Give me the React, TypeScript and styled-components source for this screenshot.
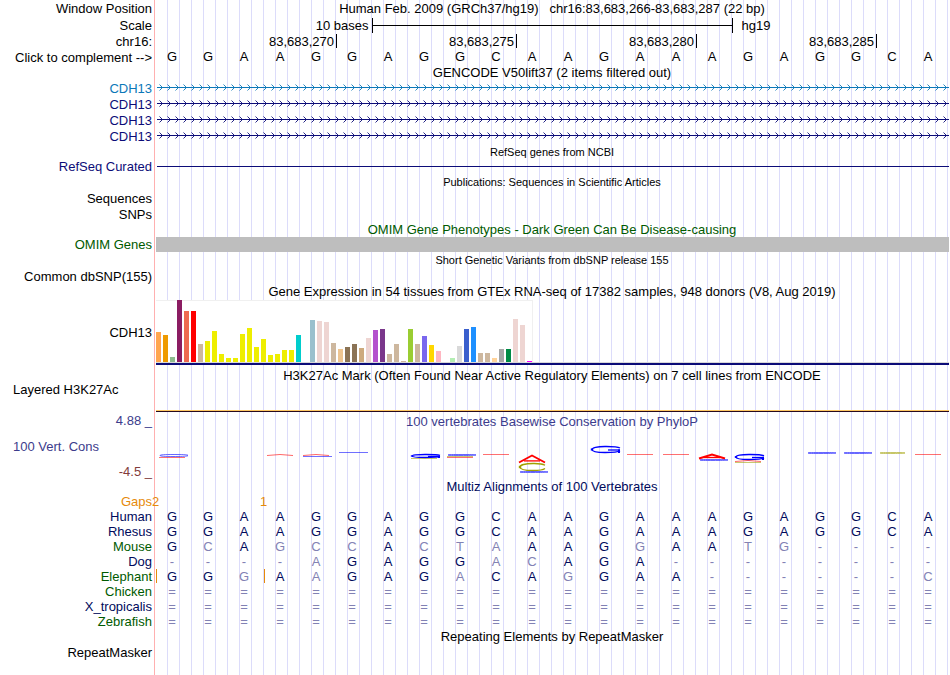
import React from "react";
import styled, { createGlobalStyle } from "styled-components";

const GlobalStyle = createGlobalStyle`
  *, *::before, *::after { box-sizing: border-box; }
  html, body { margin: 0; padding: 0; background: #fff; }
  body {
    font-family: "Liberation Sans", Arial, Helvetica, sans-serif;
    font-size: 13px;
    line-height: 15px;
    color: #000;
  }
`;

const NAVY = "#0c0c78";
const DEEP = "#000a5c";
const GREEN = "#005a00";
const ORANGE = "#e68a0a";
const MUTED = "#8282b4";
const RED = "#ff0000";
const BLUE = "#0000ff";
const OLIVE = "#a0a000";

const Browser = styled.main`
  min-height: 100vh;
  overflow: hidden;
  background-image: linear-gradient(to right, #fff 154px, #ffb0b0 154px, #ffb0b0 155px, #fff 155px),
    linear-gradient(to right, #dcdcfa 1px, transparent 1px);
  background-size: 156px 100%, 12px 100%;
  background-position: 0 0, 155px 0;
  background-repeat: no-repeat, repeat;
`;

const Track = styled.section<{ $h: number }>`
  display: grid;
  grid-template-columns: 154px minmax(0, 1fr);
  min-height: ${(p) => p.$h}px;
`;

const Label = styled.div<{ $color?: string }>`
  display: flex;
  align-items: center;
  justify-content: flex-end;
  padding: 0 2px 0 13px;
  color: ${(p) => p.$color ?? "#000"};
  white-space: nowrap;
`;

const GroupLabel = styled(Label)`
  align-items: flex-start;
  justify-content: flex-start;
  padding-top: 17px;
`;

const LabelButton = styled.button`
  padding: 0;
  border: 0;
  background: none;
  color: inherit;
  font: inherit;
  white-space: nowrap;
  cursor: pointer;
`;

const Plot = styled.div`
  min-width: 0;
  display: flex;
  flex-direction: column;
  justify-content: center;
`;

const SignalPlot = styled(Plot)`
  justify-content: flex-start;
  padding-top: 4px;
`;

const Spacer = styled.div`
  flex: 1;
`;

const Title = styled.h2<{ $color?: string; $small?: boolean }>`
  margin: 0;
  font-size: ${(p) => (p.$small ? 11 : 13)}px;
  font-weight: 400;
  line-height: 14px;
  text-align: center;
  white-space: pre;
  color: ${(p) => p.$color ?? "#000"};
`;

const ScaleGrid = styled.div`
  display: grid;
  grid-template-columns: 1fr calc((100% - 4px) * 10 / 22 + 1px) 1fr;
  align-items: center;
`;

const ScaleText = styled.span<{ $end?: boolean }>`
  padding: 0 ${(p) => (p.$end ? 3 : 9)}px;
  text-align: ${(p) => (p.$end ? "right" : "left")};
`;

const ScaleBar = styled.div`
  display: flex;
  align-items: center;
  height: 15px;
  border: solid #000;
  border-width: 0 1px;

  &::before {
    content: "";
    flex: 1;
    height: 1px;
    background: #000;
  }
`;

const Ruler = styled.div`
  display: grid;
  grid-template-columns: 5fr 5fr 5fr 5fr 2fr;
  padding: 0 1px 0 3px;
`;

const RulerMark = styled.span`
  height: 14px;
  padding-right: 2px;
  border-right: 1px solid #000;
  text-align: right;
`;

const Bases = styled.div`
  display: grid;
  grid-template-columns: repeat(22, minmax(0, 1fr));
  padding-right: 4px;
  text-align: center;
`;

const GeneSvg = styled.svg`
  display: block;
  width: calc(100% - 4px);
  height: 8px;
  margin-left: 3px;
`;

const Rule = styled.div<{ $h: number; $color: string; $inset?: number }>`
  height: ${(p) => p.$h}px;
  margin: 0 1px 0 ${(p) => p.$inset ?? 2}px;
  background: ${(p) => p.$color};
`;

const Expression = styled.div`
  display: flex;
  align-items: flex-end;
  gap: 2px;
  width: max-content;
  height: 62px;
  margin-left: 2px;
  padding-right: 1px;
  background: #fff;
  box-shadow: inset -1px 1px 0 #f0f0f0;
`;

const Bar = styled.i<{ $h: number; $color: string }>`
  width: 5px;
  height: ${(p) => p.$h}px;
  background: ${(p) => p.$color};
`;

const ConsLabels = styled.div`
  display: flex;
  flex-direction: column;
  justify-content: space-between;
  padding: 1px 2px 1px 13px;
  color: #3c3c8c;
`;

const ConsLimit = styled.span<{ $low?: boolean }>`
  text-align: right;
  color: ${(p) => (p.$low ? "#823c3c" : "inherit")};
`;

const ConsPlot = styled.div`
  display: flex;
  flex-direction: column;
  padding-top: 3px;
`;

const LogoSvg = styled.svg`
  display: block;
  width: 100%;
  height: 34px;
  margin-top: 11px;
`;

const Alignment = styled.table`
  width: calc(100% - 4px);
  table-layout: fixed;
  border-collapse: collapse;
  border-spacing: 0;
`;

const Species = styled.th<{ $color: string }>`
  width: 154px;
  height: 15px;
  padding: 0 2px 0 0;
  color: ${(p) => p.$color};
  font-weight: 400;
  text-align: right;
`;

const Base = styled.td<{ $muted: boolean; $insert: boolean }>`
  position: relative;
  height: 15px;
  padding: 0;
  text-align: center;
  color: ${(p) => (p.$muted ? MUTED : DEEP)};

  &::before {
    content: ${(p) => (p.$insert ? '""' : "none")};
    position: absolute;
    left: 2px;
    top: 0;
    width: 1px;
    height: 14px;
    background: ${ORANGE};
  }
`;

const Gap = styled.td`
  padding: 0;
  color: ${ORANGE};
`;

const GapCount = styled.span`
  margin-left: -2px;
`;

const SEQUENCE = "GGAAGGAGGCAAGAAAGAGGCA";

/* Upper case matches the human base; lower case is a substitution. */
const SPECIES = [
  { name: "Human", color: DEEP, seq: "GGAAGGAGGCAAGAAAGAGGCA" },
  { name: "Rhesus", color: DEEP, seq: "GGAAGGAGGCAAGAAAGAGGCA" },
  { name: "Mouse", color: GREEN, seq: "GcAgccActaAAGgAAtg----" },
  { name: "Dog", color: DEEP, seq: "----aGAGGacAGA--------" },
  { name: "Elephant", color: GREEN, seq: "GGgAaGAGaCAgGAA------c", inserts: [0, 3] },
  { name: "Chicken", color: GREEN, seq: "======================" },
  { name: "X_tropicalis", color: DEEP, seq: "======================" },
  { name: "Zebrafish", color: GREEN, seq: "======================" },
];

const GAPS: Record<number, string> = { 0: "2", 3: "1" };

const TISSUES: [number, string][] = [
  [30, "#ffa54f"], [27, "#ee9a00"], [5, "#8fbc8f"], [62, "#8b1c62"], [51, "#ee6a50"], [51, "#ff0000"],
  [18, "#cdb79e"], [21, "#eeee00"], [31, "#eeee00"], [8, "#eeee00"], [4, "#eeee00"], [4, "#eeee00"],
  [28, "#eeee00"], [34, "#eeee00"], [15, "#eeee00"], [23, "#eeee00"], [7, "#eeee00"], [8, "#eeee00"],
  [12, "#eeee00"], [12, "#eeee00"], [27, "#00cdcd"], [0, "#ee82ee"], [42, "#9ac0cd"], [41, "#eed5d2"],
  [40, "#eed5d2"], [19, "#cdb79e"], [13, "#eec591"], [15, "#8b7355"], [18, "#8b7355"], [14, "#cdaa7d"],
  [24, "#eed5d2"], [32, "#b452cd"], [33, "#7a378b"], [8, "#cdb79e"], [18, "#cdb79e"], [1, "#cdb79e"],
  [33, "#9acd32"], [18, "#cdb79e"], [26, "#7a67ee"], [17, "#ffd700"], [11, "#ffb6c1"], [0, "#cd9b1d"],
  [4, "#b4eeb4"], [16, "#d9d9d9"], [33, "#3a5fcd"], [35, "#1e90ff"], [9, "#cdb79e"], [9, "#cdb79e"],
  [4, "#ffd39b"], [13, "#a6a6a6"], [13, "#008b45"], [43, "#eed5d2"], [37, "#eed5d2"], [1, "#ff00ff"],
];

type Mark = { kind: "g" | "a" | "c" | "line"; y: number; h: number; color: string };

/* Conservation marks for each base; y runs down from the top of the logo strip. */
const MARKS: Record<number, Mark[]> = {
  0: [{ kind: "g", y: 14, h: 3, color: BLUE }, { kind: "line", y: 17, h: 1, color: RED }],
  3: [{ kind: "a", y: 14, h: 2, color: RED }],
  4: [{ kind: "a", y: 14, h: 2, color: RED }, { kind: "line", y: 16, h: 1, color: BLUE }],
  5: [{ kind: "line", y: 12, h: 1, color: BLUE }],
  7: [{ kind: "g", y: 14, h: 4, color: BLUE }, { kind: "line", y: 18, h: 1, color: OLIVE }],
  8: [{ kind: "g", y: 14, h: 2, color: BLUE }, { kind: "line", y: 16, h: 1, color: OLIVE }, { kind: "line", y: 17, h: 1, color: RED }],
  9: [{ kind: "line", y: 14, h: 1, color: RED }],
  10: [{ kind: "a", y: 15, h: 8, color: RED }, { kind: "c", y: 23, h: 8, color: OLIVE }, { kind: "g", y: 31, h: 2, color: BLUE }],
  12: [{ kind: "g", y: 6, h: 7, color: BLUE }],
  13: [{ kind: "line", y: 14, h: 1, color: RED }],
  14: [{ kind: "line", y: 14, h: 1, color: RED }],
  15: [{ kind: "a", y: 14, h: 5, color: RED }, { kind: "g", y: 19, h: 2, color: BLUE }],
  16: [{ kind: "g", y: 14, h: 6, color: BLUE }, { kind: "a", y: 20, h: 2, color: RED }, { kind: "line", y: 22, h: 1, color: OLIVE }],
  18: [{ kind: "g", y: 12, h: 2, color: BLUE }],
  19: [{ kind: "g", y: 12, h: 2, color: BLUE }],
  20: [{ kind: "c", y: 12, h: 2, color: OLIVE }],
  21: [{ kind: "line", y: 14, h: 1, color: RED }],
};

function LogoMark({ kind, y, h, color }: Mark) {
  const flat = h < 4;
  const stroke = { fill: "none", stroke: color, strokeWidth: flat ? 0.8 : 1.3, opacity: flat ? 0.75 : 1 };
  const top = y + 0.5;
  const low = y + h - 0.5;
  const mid = (top + low) / 2;
  const right = kind === "g" ? 34 : 31;
  if (kind === "line") {
    return <path d={`M5 ${top}H${color === BLUE ? 34 : 31}`} stroke={color} strokeWidth="0.8" opacity="0.7" />;
  }
  if (kind === "a") {
    return (
      <g {...stroke}>
        <path d={`M5 ${low}L18 ${top}L31 ${low}`} strokeWidth={flat ? 0.8 : 1.9} />
        {!flat && <path d={`M10 ${low - h * 0.2}H26`} />}
      </g>
    );
  }
  const bowl = `M${right} ${top + h * 0.22}C${right - 3} ${top - h * 0.02} 24 ${top} 19 ${top}C11 ${top} 6 ${mid - h * 0.25} 6 ${mid}C6 ${mid + h * 0.25} 11 ${low} 19 ${low}C26 ${low} ${right - 2} ${low - h * 0.05} ${right} ${low - h * 0.25}`;
  return (
    <g {...stroke}>
      <path d={bowl} />
      {!flat && <path d={`M6 ${mid - h * 0.15}V${mid + h * 0.15}`} strokeWidth="2.4" />}
      {kind === "g" && !flat && (
        <>
          <path d={`M22 ${mid + 0.5}H34`} />
          <path d={`M33 ${mid}V${low + 0.5}`} strokeWidth="2" />
        </>
      )}
    </g>
  );
}

function GeneLine({ id, color }: { id: string; color: string }) {
  return (
    <GeneSvg role="img" aria-label="Forward strand intron">
      <defs>
        <pattern id={id} width="8" height="8" patternUnits="userSpaceOnUse">
          <path d="M2.5 0.5L5.5 3.5L2.5 6.5" fill="none" stroke={color} strokeWidth="0.9" />
        </pattern>
      </defs>
      <rect width="100%" height="8" fill={`url(#${id})`} />
      <rect y="3" width="100%" height="1" fill={color} />
    </GeneSvg>
  );
}

function TitleRow({ h, children, color, small }: { h: number; children: React.ReactNode; color?: string; small?: boolean }) {
  return (
    <Track $h={h}>
      <Label />
      <Plot>
        <Title $color={color} $small={small}>{children}</Title>
      </Plot>
    </Track>
  );
}

const GENES = ["#0c78b8", NAVY, NAVY, NAVY];

export default function App() {
  return (
    <>
      <GlobalStyle />
      <Browser>
        <Track $h={17}>
          <Label>Window Position</Label>
          <Plot>
            <Title>{"Human Feb. 2009 (GRCh37/hg19)   chr16:83,683,266-83,683,287 (22 bp)"}</Title>
          </Plot>
        </Track>
        <Track $h={17}>
          <Label>Scale</Label>
          <ScaleGrid>
            <ScaleText $end>10 bases</ScaleText>
            <ScaleBar />
            <ScaleText>hg19</ScaleText>
          </ScaleGrid>
        </Track>
        <Track $h={15}>
          <Label>chr16:</Label>
          <Ruler>
            {["83,683,270", "83,683,275", "83,683,280", "83,683,285"].map((p) => (
              <RulerMark key={p}>{p}</RulerMark>
            ))}
          </Ruler>
        </Track>
        <Track $h={17}>
          <Label>
            <LabelButton type="button">Click to complement --&gt;</LabelButton>
          </Label>
          <Bases>
            {SEQUENCE.split("").map((b, i) => (
              <span key={i}>{b}</span>
            ))}
          </Bases>
        </Track>

        <TitleRow h={14}>GENCODE V50lift37 (2 items filtered out)</TitleRow>
        {GENES.map((color, i) => (
          <Track $h={16} key={i}>
            <Label $color={color}>CDH13</Label>
            <Plot>
              <GeneLine id={`strand-${i}`} color={color} />
            </Plot>
          </Track>
        ))}

        <TitleRow h={15} small>RefSeq genes from NCBI</TitleRow>
        <Track $h={15}>
          <Label $color={NAVY}>RefSeq Curated</Label>
          <Plot>
            <Rule $h={1} $color={NAVY} $inset={3} />
          </Plot>
        </Track>

        <TitleRow h={16} small>Publications: Sequences in Scientific Articles</TitleRow>
        <Track $h={16}>
          <Label>Sequences</Label>
        </Track>
        <Track $h={16}>
          <Label>SNPs</Label>
        </Track>

        <TitleRow h={15} color={GREEN}>OMIM Gene Phenotypes - Dark Green Can Be Disease-causing</TitleRow>
        <Track $h={15}>
          <Label $color={GREEN}>OMIM Genes</Label>
          <Plot>
            <Rule $h={15} $color="#bebebe" />
          </Plot>
        </Track>

        <TitleRow h={16} small>Short Genetic Variants from dbSNP release 155</TitleRow>
        <Track $h={16}>
          <Label>Common dbSNP(155)</Label>
        </Track>

        <TitleRow h={16}>Gene Expression in 54 tissues from GTEx RNA-seq of 17382 samples, 948 donors (V8, Aug 2019)</TitleRow>
        <Track $h={65}>
          <Label>CDH13</Label>
          <div>
            <Expression role="img" aria-label="CDH13 expression by tissue">
              {TISSUES.map(([h, color], i) => (
                <Bar key={i} $h={h} $color={color} />
              ))}
            </Expression>
            <Rule $h={1} $color="#d8d8d8" />
            <Rule $h={2} $color={NAVY} />
          </div>
        </Track>

        <Track $h={47}>
          <GroupLabel>Layered H3K27Ac</GroupLabel>
          <SignalPlot>
            <Title>H3K27Ac Mark (Often Found Near Active Regulatory Elements) on 7 cell lines from ENCODE</Title>
            <Spacer />
            <Rule $h={1} $color="#ffc864" />
            <Rule $h={1} $color="#280a1e" />
          </SignalPlot>
        </Track>

        <Track $h={68}>
          <ConsLabels>
            <ConsLimit>4.88 _</ConsLimit>
            <span>100 Vert. Cons</span>
            <ConsLimit $low>-4.5 _</ConsLimit>
          </ConsLabels>
          <ConsPlot>
            <Title $color="#3c3c8c">100 vertebrates Basewise Conservation by PhyloP</Title>
            <Bases role="img" aria-label="Conservation logo">
              {SEQUENCE.split("").map((_, i) => (
                <LogoSvg key={i} viewBox="0 0 36 34" preserveAspectRatio="none">
                  {(MARKS[i] ?? []).map((m, k) => (
                    <LogoMark key={k} {...m} />
                  ))}
                </LogoSvg>
              ))}
            </Bases>
          </ConsPlot>
        </Track>

        <TitleRow h={14} color={DEEP}>Multiz Alignments of 100 Vertebrates</TitleRow>
        <Alignment>
          <tbody>
            <tr>
              <Species scope="row" $color={ORANGE}>Gaps</Species>
              {SEQUENCE.split("").map((_, i) => (
                <Gap key={i}>{GAPS[i] && <GapCount>{GAPS[i]}</GapCount>}</Gap>
              ))}
            </tr>
            {SPECIES.map((s) => (
              <tr key={s.name}>
                <Species scope="row" $color={s.color}>{s.name}</Species>
                {s.seq.split("").map((b, i) => (
                  <Base key={i} $muted={!/[A-Z]/.test(b)} $insert={!!s.inserts?.includes(i)}>
                    {b.toUpperCase()}
                  </Base>
                ))}
              </tr>
            ))}
          </tbody>
        </Alignment>

        <TitleRow h={16}>Repeating Elements by RepeatMasker</TitleRow>
        <Track $h={15}>
          <Label>RepeatMasker</Label>
        </Track>
      </Browser>
    </>
  );
}
